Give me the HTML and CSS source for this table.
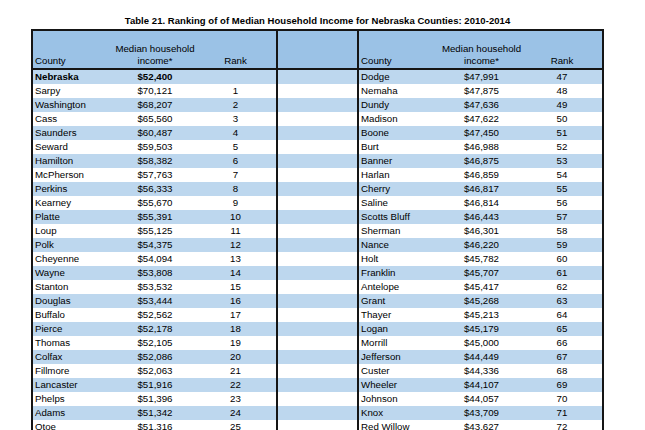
FILE: index.html
```html
<!DOCTYPE html>
<html>
<head>
<meta charset="utf-8">
<link rel="stylesheet" href="styles.css">
</head>
<body>
<div class="page">
  <h1 class="title">Table 21. Ranking of of Median Household Income for Nebraska Counties: 2010-2014</h1>
  <div class="table">
    <div class="row head">
      <div class="c county">County</div>
      <div class="c num"><span>Median household<br>income*</span></div>
      <div class="c num sep">Rank</div>
      <div class="c sep"></div>
      <div class="c county">County</div>
      <div class="c num"><span>Median household<br>income*</span></div>
      <div class="c num">Rank</div>
    </div>
    <div id="body"></div>
  </div>
</div>
<script src="script.js"></script>
</body>
</html>
```
FILE: styles.css
```css
html, body {
  margin: 0;
  padding: 0;
  background: #fff;
}
.page {
  padding: 14px 0 0 31px;
  width: 573px;
  font-family: "Liberation Sans", Arial, sans-serif;
  color: #000;
}
.title {
  margin: 0 0 2px 0;
  font-size: 9.5px;
  line-height: 13px;
  font-weight: bold;
  text-align: center;
  letter-spacing: 0.05px;
}
.table {
  border: 2px solid #151515;
  border-bottom: none;
  width: 573px;
  box-sizing: border-box;
}
.row {
  display: grid;
  grid-template-columns: 82px 80px 83px 81px 82px 81px 80px;
  height: 14px;
  font-size: 9.7px;
  line-height: 14px;
}
.row:nth-child(odd) {
  background: #bdd7ee;
}
.row.head {
  height: 37px;
  background: #9bc2e6;
  border-bottom: 2px solid #151515;
  line-height: 12px;
}
.head .c {
  display: flex;
  align-items: flex-end;
  padding-bottom: 1px;
}
.head .num {
  justify-content: center;
}
.c {
  box-sizing: border-box;
  white-space: nowrap;
}
.county {
  padding-left: 2px;
}
.num {
  text-align: center;
}
.sep {
  border-right: 2px solid #151515;
}
.bold {
  font-weight: bold;
}
```
FILE: script.js
```js
var left = [
  ["Nebraska","$52,400",""],
  ["Sarpy","$70,121","1"],["Washington","$68,207","2"],["Cass","$65,560","3"],
  ["Saunders","$60,487","4"],["Seward","$59,503","5"],["Hamilton","$58,382","6"],
  ["McPherson","$57,763","7"],["Perkins","$56,333","8"],["Kearney","$55,670","9"],
  ["Platte","$55,391","10"],["Loup","$55,125","11"],["Polk","$54,375","12"],
  ["Cheyenne","$54,094","13"],["Wayne","$53,808","14"],["Stanton","$53,532","15"],
  ["Douglas","$53,444","16"],["Buffalo","$52,562","17"],["Pierce","$52,178","18"],
  ["Thomas","$52,105","19"],["Colfax","$52,086","20"],["Fillmore","$52,063","21"],
  ["Lancaster","$51,916","22"],["Phelps","$51,396","23"],["Adams","$51,342","24"],
  ["Otoe","$51,316","25"]
];
var right = [
  ["Dodge","$47,991","47"],["Nemaha","$47,875","48"],["Dundy","$47,636","49"],
  ["Madison","$47,622","50"],["Boone","$47,450","51"],["Burt","$46,988","52"],
  ["Banner","$46,875","53"],["Harlan","$46,859","54"],["Cherry","$46,817","55"],
  ["Saline","$46,814","56"],["Scotts Bluff","$46,443","57"],["Sherman","$46,301","58"],
  ["Nance","$46,220","59"],["Holt","$45,782","60"],["Franklin","$45,707","61"],
  ["Antelope","$45,417","62"],["Grant","$45,268","63"],["Thayer","$45,213","64"],
  ["Logan","$45,179","65"],["Morrill","$45,000","66"],["Jefferson","$44,449","67"],
  ["Custer","$44,336","68"],["Wheeler","$44,107","69"],["Johnson","$44,057","70"],
  ["Knox","$43,709","71"],["Red Willow","$43,627","72"]
];
var body = document.getElementById("body");
for (var i = 0; i < left.length; i++) {
  var l = left[i], r = right[i];
  var row = document.createElement("div");
  row.className = "row";
  var b = i === 0 ? " bold" : "";
  row.innerHTML =
    '<div class="c county' + b + '">' + l[0] + '</div>' +
    '<div class="c num' + b + '">' + l[1] + '</div>' +
    '<div class="c num sep">' + l[2] + '</div>' +
    '<div class="c sep"></div>' +
    '<div class="c county">' + r[0] + '</div>' +
    '<div class="c num">' + r[1] + '</div>' +
    '<div class="c num">' + r[2] + '</div>';
  body.appendChild(row);
}
```
